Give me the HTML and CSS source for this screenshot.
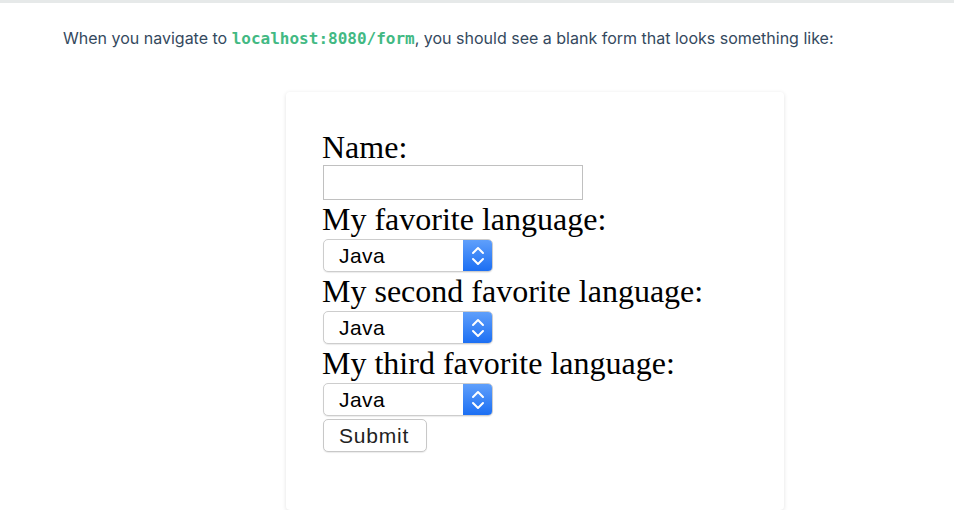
FILE: index.html
```html
<!DOCTYPE html>
<html>
<head>
<meta charset="utf-8">
<link rel="stylesheet" href="styles.css">
</head>
<body>
<div class="topbar"></div>
<p class="intro">When you navigate to <code>localhost:8080/form</code>, you should see a blank form that looks something like:</p>
<div class="card">
  <form class="form">
    <label class="label first">Name:</label>
    <div class="input"></div>
    <label class="label">My favorite language:</label>
    <div class="select"><span class="select-text">Java</span><span class="select-arrow"><svg width="16" height="24" viewBox="0 0 16 24"><path d="M3 9 L8 4 L13 9" fill="none" stroke="#fff" stroke-width="2" stroke-linecap="round" stroke-linejoin="round"/><path d="M3 15 L8 20 L13 15" fill="none" stroke="#fff" stroke-width="2" stroke-linecap="round" stroke-linejoin="round"/></svg></span></div>
    <label class="label">My second favorite language:</label>
    <div class="select"><span class="select-text">Java</span><span class="select-arrow"><svg width="16" height="24" viewBox="0 0 16 24"><path d="M3 9 L8 4 L13 9" fill="none" stroke="#fff" stroke-width="2" stroke-linecap="round" stroke-linejoin="round"/><path d="M3 15 L8 20 L13 15" fill="none" stroke="#fff" stroke-width="2" stroke-linecap="round" stroke-linejoin="round"/></svg></span></div>
    <label class="label">My third favorite language:</label>
    <div class="select"><span class="select-text">Java</span><span class="select-arrow"><svg width="16" height="24" viewBox="0 0 16 24"><path d="M3 9 L8 4 L13 9" fill="none" stroke="#fff" stroke-width="2" stroke-linecap="round" stroke-linejoin="round"/><path d="M3 15 L8 20 L13 15" fill="none" stroke="#fff" stroke-width="2" stroke-linecap="round" stroke-linejoin="round"/></svg></span></div>
    <div class="submit">Submit</div>
  </form>
</div>
</body>
</html>
```
FILE: styles.css
```css
html, body {
  margin: 0;
  padding: 0;
  background: #fff;
}
.topbar {
  height: 3px;
  background: #e6e9e9;
}
.intro {
  margin: 23px 0 0 63px;
  font-family: Inter, "Noto Sans", sans-serif;
  font-size: 16px;
  line-height: 24px;
  color: #34495e;
}
.intro code {
  font-family: "DejaVu Sans Mono", monospace;
  font-weight: bold;
  font-size: 16px;
  color: #42b983;
}
.card {
  margin: 41px 0 0 286px;
  width: 498px;
  height: 418px;
  box-sizing: border-box;
  padding: 37px 0 0 37px;
  background: #fff;
  border-radius: 4px;
  box-shadow: 0 1px 4px rgba(0, 0, 0, 0.12);
}
.form {
  display: flex;
  flex-direction: column;
  align-items: flex-start;
  margin: 0;
}
.label {
  font-family: "Liberation Serif", "Times New Roman", serif;
  font-size: 32px;
  line-height: 36px;
  color: #000;
  margin-top: 1px;
  margin-left: -1px;
}
.label.first {
  margin-top: 0;
}
.input {
  width: 260px;
  height: 35px;
  box-sizing: border-box;
  border: 1px solid #c0c0c0;
  background: #fff;
}
.select {
  margin-top: 2px;
  width: 170px;
  height: 33px;
  box-sizing: border-box;
  display: flex;
  border: 1px solid #cdcdcd;
  border-radius: 5px;
  background: #fff;
  box-shadow: 0 1px 1px rgba(0, 0, 0, 0.08);
  overflow: hidden;
}
.select-text {
  flex: 1;
  padding-left: 15px;
  font-family: "Liberation Sans", Arial, sans-serif;
  font-size: 21px;
  line-height: 31px;
  letter-spacing: 0.4px;
  color: #000;
}
.select-arrow {
  width: 29px;
  display: flex;
  align-items: center;
  justify-content: center;
  background: linear-gradient(#5f9ffb, #1c6ff3);
}
.submit {
  margin-top: 3px;
  width: 104px;
  height: 33px;
  box-sizing: border-box;
  border: 1px solid #c8c8c8;
  border-radius: 5px;
  background: #fff;
  box-shadow: 0 1px 1px rgba(0, 0, 0, 0.08);
  font-family: "Liberation Sans", Arial, sans-serif;
  font-size: 21px;
  line-height: 31px;
  letter-spacing: 0.8px;
  padding-left: 15px;
  color: #222;
}
```
